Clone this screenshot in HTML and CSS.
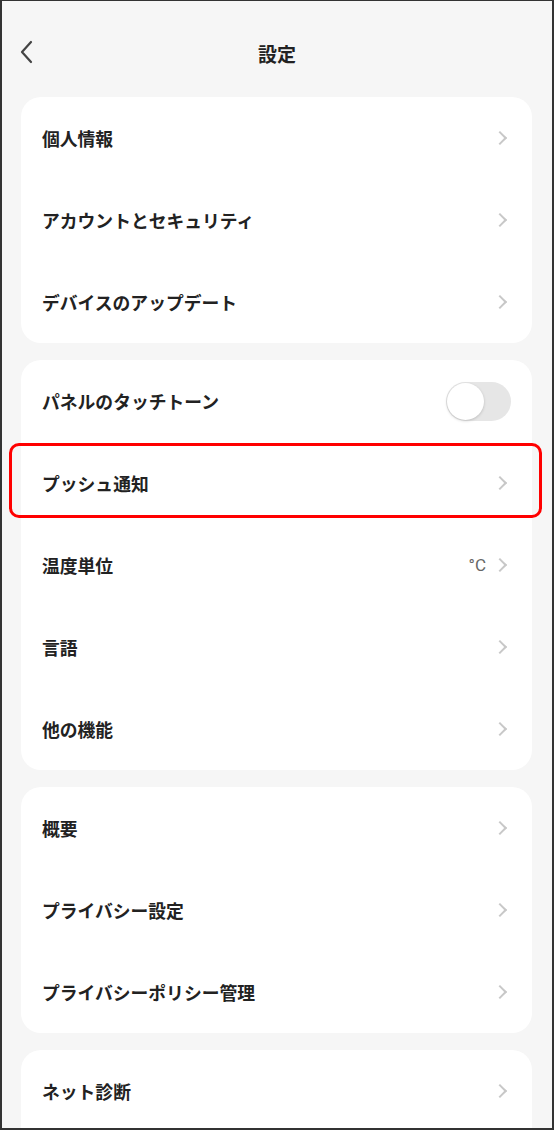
FILE: index.html
```html
<!DOCTYPE html>
<html lang="ja">
<head>
<meta charset="utf-8">
<title>設定</title>
<link rel="stylesheet" href="styles.css">
</head>
<body>
<div class="frame">
  <header class="header">
    <svg class="back" viewBox="0 0 14 24" width="14" height="24"><path d="M12 2 L3 12 L12 22" fill="none" stroke="#444" stroke-width="2.2" stroke-linecap="round" stroke-linejoin="round"/></svg>
    <h1 class="title">設定</h1>
  </header>

  <section class="card">
    <div class="row"><span class="label">個人情報</span><span class="chev"></span></div>
    <div class="row"><span class="label">アカウントとセキュリティ</span><span class="chev"></span></div>
    <div class="row"><span class="label">デバイスのアップデート</span><span class="chev"></span></div>
  </section>

  <section class="card">
    <div class="row"><span class="label">パネルのタッチトーン</span><span class="toggle"><span class="knob"></span></span></div>
    <div class="row"><span class="label">プッシュ通知</span><span class="chev"></span></div>
    <div class="row"><span class="label">温度単位</span><span class="value">°C</span><span class="chev"></span></div>
    <div class="row"><span class="label">言語</span><span class="chev"></span></div>
    <div class="row"><span class="label">他の機能</span><span class="chev"></span></div>
  </section>

  <section class="card">
    <div class="row"><span class="label">概要</span><span class="chev"></span></div>
    <div class="row"><span class="label">プライバシー設定</span><span class="chev"></span></div>
    <div class="row"><span class="label">プライバシーポリシー管理</span><span class="chev"></span></div>
  </section>

  <section class="card">
    <div class="row"><span class="label">ネット診断</span><span class="chev"></span></div>
    <div class="row"><span class="label">&nbsp;</span></div>
  </section>

  <div class="highlight"></div>
</div>
</body>
</html>
```

FILE: styles.css
```css
* { box-sizing: border-box; }
html, body { margin: 0; padding: 0; }
body {
  width: 554px;
  height: 1130px;
  overflow: hidden;
  font-family: "Noto Sans CJK JP", "Noto Sans", sans-serif;
  color: #222;
}
.frame {
  position: relative;
  width: 554px;
  height: 1130px;
  border: 2px solid #333;
  border-top-width: 1px;
  background: #f6f6f6;
  overflow: hidden;
}
.header {
  position: relative;
  height: 88px;
  margin-top: 8px;
  display: flex;
  align-items: center;
  justify-content: center;
}
.back {
  position: absolute;
  left: 17px;
  top: 31px;
}
.title {
  margin: 0;
  font-size: 19px;
  font-weight: 700;
  color: #222;
}
.card {
  margin: 0 20px 17px 19px;
  background: #fff;
  border-radius: 20px;
}
.row {
  height: 82px;
  display: flex;
  align-items: center;
  padding: 0 21px 0 21px;
}
.label {
  flex: 1;
  font-size: 17.8px;
  font-weight: 700;
  color: #222;
  margin-top: -1px;
}
.value {
  font-family: "Roboto", "Noto Sans", sans-serif;
  font-size: 17px;
  color: #666;
  margin-right: 9px;
}
.chev {
  width: 10px;
  height: 10px;
  border-top: 2px solid #c8c8c8;
  border-right: 2px solid #c8c8c8;
  transform: rotate(45deg);
  margin-right: 6px;
}
.toggle {
  position: relative;
  width: 65px;
  height: 39px;
  border-radius: 20px;
  background: #e6e6e6;
}
.knob {
  position: absolute;
  left: 1px;
  top: 1px;
  width: 37px;
  height: 37px;
  border-radius: 50%;
  background: #fff;
  box-shadow: 0 1px 3px rgba(0,0,0,0.18);
}
.highlight {
  position: absolute;
  left: 7px;
  top: 442px;
  width: 533px;
  height: 75px;
  border: 3px solid #f00;
  border-radius: 10px;
}
```
